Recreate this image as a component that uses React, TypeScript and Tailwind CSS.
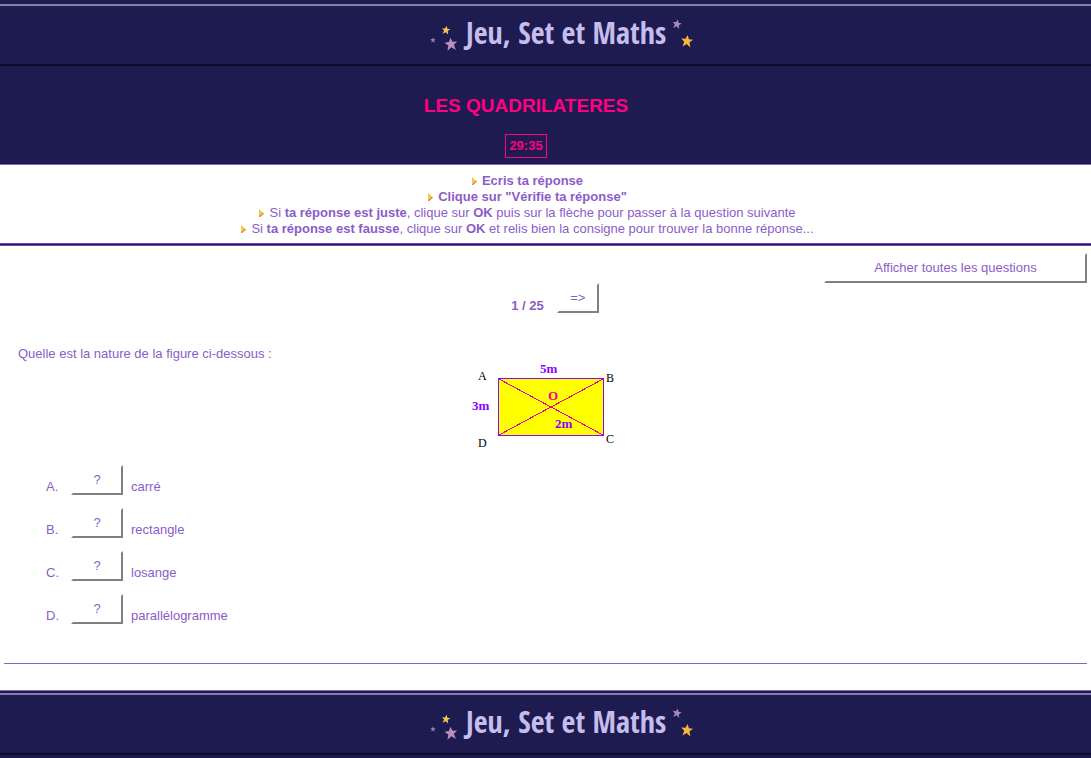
const star = "M0 -10 L2.8 -3.4 L10 -3 L4.4 1.8 L6.6 10 L0 5.2 L-6.6 10 L-4.4 1.8 L-10 -3 L-2.8 -3.4 Z";

function Logo() {
  return (
    <svg
      viewBox="0 0 270 50"
      className="h-[50px] w-[270px] shrink-0"
      role="img"
      aria-label="Jeu, Set et Maths"
    >
      <path d={star} fill="#8d7bb2" transform="translate(6 32) scale(.27)" />
      <path d={star} fill="#f3c653" transform="translate(19 22) rotate(8) scale(.42)" />
      <path d={star} fill="#b78fc0" transform="translate(24 36) rotate(-6) scale(.64)" />
      <text
        x="39"
        y="36"
        fill="#c5bdec"
        className="font-['Open_Sans_Condensed','Liberation_Sans_Narrow','DejaVu_Sans_Condensed',sans-serif] text-[30px] font-bold"
      >
        Jeu, Set et Maths
      </text>
      <path d={star} fill="#a58abb" transform="translate(250 16) rotate(10) scale(.46)" />
      <path d={star} fill="#f6b83c" transform="translate(260 33) rotate(6) scale(.6)" />
    </svg>
  );
}

function Banner() {
  return (
    <div className="border-t-2 border-b-2 border-t-[#8580a8] border-b-[#0f0d24] bg-[#1d1b50]">
      <div className="flex h-[58px] items-center justify-center pb-1 pl-8">
        <Logo />
      </div>
    </div>
  );
}

function Bullet() {
  return (
    <svg viewBox="0 0 5 8" className="mr-[5px] inline-block h-2 w-[5px] align-baseline" aria-hidden="true">
      <path d="M0 0 L5 4.5 L1 8 L0 8 Z" fill="#fbc44c" />
      <path d="M5 4.5 L1 8 L0 8 L0 7.5 L4 4 Z" fill="#c08a2c" />
    </svg>
  );
}

const raised =
  "border-2 border-t-white border-r-[#808080] border-b-[#808080] border-l-white bg-white text-center";

const answers = [
  { letter: "A.", text: "carré" },
  { letter: "B.", text: "rectangle" },
  { letter: "C.", text: "losange" },
  { letter: "D.", text: "parallélogramme" },
];

function Figure() {
  return (
    <svg
      viewBox="0 1 150 89"
      className="h-[89px] w-[150px] font-['Liberation_Serif',serif]"
      role="img"
      aria-label="Rectangle ABCD"
    >
      <g shapeRendering="crispEdges">
        <rect x="30.5" y="17.5" width="105" height="57" fill="#ffff00" stroke="#9000ff" />
        <path d="M31 18 L135 74 M31 74 L135 18" stroke="#e000a0" fill="none" />
      </g>
      <g fontSize="12" fill="#000">
        <text x="10" y="19">A</text>
        <text x="138" y="21">B</text>
        <text x="138" y="82">C</text>
        <text x="10" y="86">D</text>
      </g>
      <g fontSize="13" fontWeight="bold" fill="#8c00ff">
        <text x="72" y="12">5m</text>
        <text x="4" y="49">3m</text>
        <text x="87" y="67">2m</text>
      </g>
      <text x="80" y="39" fontSize="13" fontWeight="bold" fill="#f00090">O</text>
    </svg>
  );
}

export default function App() {
  return (
    <div className="min-h-screen bg-[#1d1b50] font-['Liberation_Sans',Arial,sans-serif] text-[13px] leading-4 text-[#8c5cc8]">
      <header className="border-b border-[#8a5fd0] pt-1">
        <Banner />
        <div className="flex flex-col items-center pt-7 pr-[39px] pb-[6px] text-[#ff0080]">
          <h1 className="text-[19px] leading-6 font-bold">LES QUADRILATERES</h1>
          <div className="mt-4 border border-[#ff0080] px-[3px] py-[3px] font-bold" role="timer">
            29:35
          </div>
        </div>
      </header>

      <main className="bg-white">
        <section className="pt-2 pr-9 pb-[6px] text-center">
          <p><Bullet /><b>Ecris ta réponse</b></p>
          <p><Bullet /><b>Clique sur "Vérifie ta réponse"</b></p>
          <p>
            <Bullet />Si <b>ta réponse est juste</b>, clique sur <b>OK</b> puis sur la flèche pour passer à la question suivante
          </p>
          <p>
            <Bullet />Si <b>ta réponse est fausse</b>, clique sur <b>OK</b> et relis bien la consigne pour trouver la bonne réponse...
          </p>
        </section>
        <div className="h-[3px] border-y border-[#6f48b8] bg-[#1d1b50]" />

        <section className="px-1 pt-[7px] pb-[26px]">
          <div className="flex justify-end">
            <button type="button" className={`${raised} h-[30px] w-[263px]`}>
              Afficher toutes les questions
            </button>
          </div>
          <nav className="flex items-end justify-center gap-[13px] pl-[19px]">
            <span className="font-bold">1 / 25</span>
            <button type="button" className={`${raised} mb-px h-[30px] w-[42px]`}>
              =&gt;
            </button>
          </nav>
          <p className="mt-8 px-[14px]">Quelle est la nature de la figure ci-dessous :</p>
          <div className="flex justify-center pr-[6px]">
            <Figure />
          </div>
          <ol className="mt-[14px] flex flex-col gap-[13px] pl-[42px]">
            {answers.map((a) => (
              <li key={a.letter} className="flex h-[30px] items-end">
                <span className="w-[25px]">{a.letter}</span>
                <button type="button" aria-label={`? ${a.text}`} className={`${raised} h-[30px] w-[52px]`}>
                  ?
                </button>
                <span className="ml-2">{a.text}</span>
              </li>
            ))}
          </ol>
          <hr className="mt-[39px] border-t border-[#8a5fd0]" />
        </section>
      </main>

      <footer className="border-t border-[#8a5fd0] pt-[2px]">
        <Banner />
      </footer>
    </div>
  );
}
